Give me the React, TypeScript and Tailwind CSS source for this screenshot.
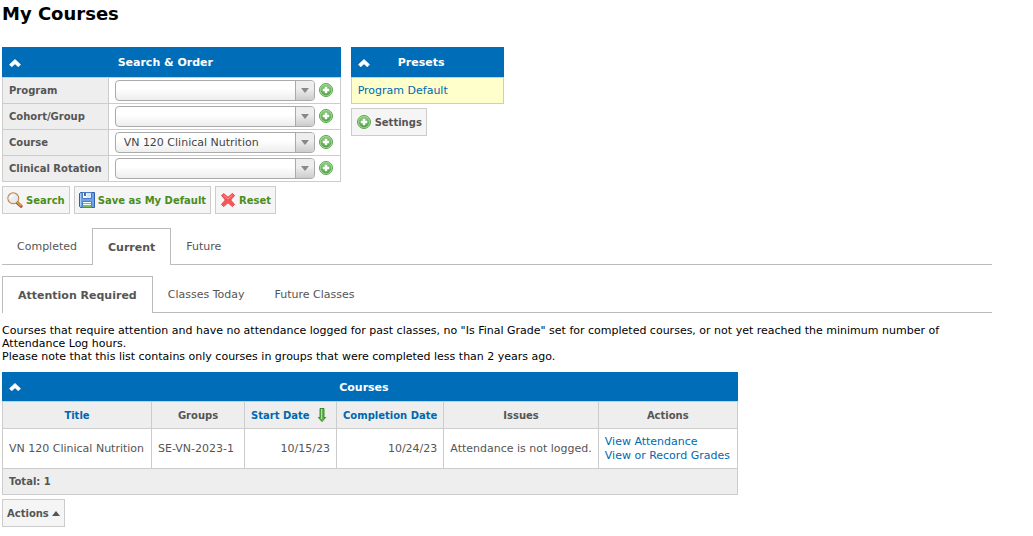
import { useState } from "react";

interface Filter {
  id: string;
  label: string;
  options: string[];
}

const filters: Filter[] = [
  { id: "program", label: "Program", options: [""] },
  { id: "cohort", label: "Cohort/Group", options: [""] },
  { id: "course", label: "Course", options: ["VN 120 Clinical Nutrition"] },
  { id: "rotation", label: "Clinical Rotation", options: [""] },
];

const Collapse = () => (
  <svg width="12" height="8" viewBox="0 0 12 8" className="block" aria-hidden="true">
    <path
      d="M6 .4 11.5 5.6 9.7 7.5H9L6 4.8 3 7.5h-.7L.5 5.6z"
      fill="#fff"
      stroke="#fff"
      strokeWidth="0.7"
      strokeLinejoin="round"
    />
  </svg>
);

const PlusIcon = () => (
  <svg width="16" height="16" viewBox="-1 -1 16 16" className="block" aria-hidden="true">
    <defs>
      <linearGradient id="plus" x1="0" y1="0" x2="0" y2="1">
        <stop offset="0" stopColor="#8bcb80" />
        <stop offset="1" stopColor="#50a443" />
      </linearGradient>
    </defs>
    <circle cx="7" cy="7" r="6.5" fill="#b4dfa8" stroke="#5aa34e" strokeWidth="1" />
    <circle cx="7" cy="7" r="5.4" fill="url(#plus)" />
    <path d="M6 4h2v2h2v2H8v2H6V8H4V6h2z" fill="#fff" stroke="#fff" strokeWidth="0.5" />
  </svg>
);

const SearchIcon = () => (
  <svg width="16" height="16" viewBox="0 0 16 16" aria-hidden="true">
    <path d="m10 10.5 4 3.7" stroke="#98562b" strokeWidth="3.2" strokeLinecap="round" />
    <path d="m10.3 10.3 3.5 3.2" stroke="#dc9860" strokeWidth="1.8" strokeLinecap="round" />
    <circle cx="6.3" cy="6.3" r="5.4" fill="#e4eef9" stroke="#b98650" strokeWidth="1.2" />
    <circle cx="6.3" cy="6.3" r="4.4" fill="none" stroke="#f5dfbd" strokeWidth="0.9" />
    <path d="M3.2 6.4a3.2 3.2 0 0 1 3.2-3.2" fill="none" stroke="#fff" strokeWidth="1.5" />
  </svg>
);

const SaveIcon = () => (
  <svg width="16" height="16" viewBox="0 0 16 16" aria-hidden="true">
    <path d="M.5 1.5 1.5.5h14v15h-14l-1-1z" fill="#6ba2e3" stroke="#2f5eaa" />
    <path d="M1.5 1.5v12.7" stroke="#a9cdf7" />
    <path d="M3.5.5h9v6h-9z" fill="#f5f9ff" stroke="#4b7dc4" />
    <path d="M5 1h2v3H5z" fill="#3f6db7" />
    <path d="M8 1h4v5H8z" fill="#d9e6f7" />
    <path d="M3.5 9.5h9v6h-9z" fill="#fff" stroke="#4b7dc4" />
    <path d="M4 11h8v1H4zM4 13h8v2H4z" fill="#78bd62" />
  </svg>
);

const ResetIcon = () => (
  <svg width="16" height="16" viewBox="-1 -1 16 16" aria-hidden="true">
    <path
      d="M.6 2.6 2.6.6 7 4.2 11.4.4l2.2 2.2L9.7 7l3.9 4.4-2.2 2.2L7 9.8l-4.4 3.8-2.2-2.2L4.3 7z"
      fill="#f5565a"
      stroke="#df363b"
      strokeWidth="0.8"
      strokeLinejoin="round"
    />
    <path d="m2.6 2.2 4.4 3.7 4.4-3.7" fill="none" stroke="#ff9493" strokeWidth="1" />
  </svg>
);

const SortIcon = () => (
  <svg width="16" height="16" viewBox="-4 -1 16 16" className="block" aria-hidden="true">
    <path d="M2 .5h4v9h1.7L4 13.6.3 9.5H2z" fill="#63b152" stroke="#34822b" strokeWidth="0.9" />
    <path d="M3.5 1v10" stroke="#b4dfa6" strokeWidth="1" />
  </svg>
);

const Button = ({
  children,
  className = "text-[#555]",
}: {
  children: React.ReactNode;
  className?: string;
}) => (
  <button
    type="button"
    className={`flex h-7 items-center gap-[3px] border border-[#ccc] bg-[#f5f5f5] px-1 text-[10px] font-bold whitespace-nowrap ${className}`}
  >
    {children}
  </button>
);

const PanelHead = ({ title }: { title: string }) => (
  <div className="grid grid-cols-[12px_1fr] items-center px-[6px]">
    <button type="button" aria-label={`Collapse ${title}`}>
      <Collapse />
    </button>
    <span className="pr-6 text-center text-[11px]">{title}</span>
  </div>
);

const Tabs = ({ items, initial }: { items: string[]; initial: string }) => {
  const [active, setActive] = useState(initial);

  return (
    <div role="tablist" className="flex h-[37px] border-b border-[#bbb]">
      {items.map((item) => (
        <button
          key={item}
          type="button"
          role="tab"
          aria-selected={item === active}
          onClick={() => setActive(item)}
          className={
            item === active
              ? "-mb-px border border-b-0 border-[#bbb] bg-white px-[15px] font-bold"
              : "px-[15px]"
          }
        >
          {item}
        </button>
      ))}
    </div>
  );
};

const th = "border border-[#ccc] px-[6px] text-[10px] font-bold";
const td = "border border-[#ccc] px-[6px]";

export default function App() {
  return (
    <main className="bg-white pt-1 pr-[41px] pb-2 pl-[2px] font-['Verdana','DejaVu_Sans',sans-serif] text-[11px] leading-[13px] text-[#555]">
      <h1 className="text-lg leading-5 font-bold text-black">My Courses</h1>

      <div className="mt-[23px] flex items-start gap-[10px]">
        <section>
          <table className="border-collapse">
            <thead>
              <tr className="h-[30px] bg-[#006db8] text-white">
                <th colSpan={2} className="border border-[#006db8] border-b-[#ccc] p-0">
                  <PanelHead title="Search & Order" />
                </th>
              </tr>
            </thead>
            <tbody>
              {filters.map((filter) => (
                <tr key={filter.id} className="h-[26px]">
                  <th className={`${th} bg-[#eee] text-left whitespace-nowrap`}>
                    <label htmlFor={filter.id}>{filter.label}</label>
                  </th>
                  <td className={td}>
                    <div className="flex items-start gap-[3px]">
                      <div className="relative">
                        <select
                          id={filter.id}
                          className="block h-[21px] w-[200px] appearance-none rounded-[4px] border border-[#aaa] bg-linear-to-t from-[#eee] to-white to-60% pr-6 pl-2 text-[#444]"
                        >
                          {filter.options.map((option) => (
                            <option key={option}>{option}</option>
                          ))}
                        </select>
                        <span className="pointer-events-none absolute inset-y-px right-px flex w-[19px] items-center justify-center rounded-r-[3px] border-l border-[#aaa] bg-linear-to-t from-[#ccc] to-[#eee] to-60%">
                          <svg width="8" height="5" viewBox="0 0 8 5" aria-hidden="true">
                            <path d="M0 0h8L4 5z" fill="#888" />
                          </svg>
                        </span>
                      </div>
                      <button type="button" className="h-5" aria-label={`Add ${filter.label}`}>
                        <PlusIcon />
                      </button>
                    </div>
                  </td>
                </tr>
              ))}
            </tbody>
          </table>
          <div className="mt-1 flex gap-1">
            <Button className="text-[#4b8d1c]">
              <SearchIcon />
              Search
            </Button>
            <Button className="text-[#4b8d1c]">
              <SaveIcon />
              Save as My Default
            </Button>
            <Button className="text-[#4b8d1c]">
              <ResetIcon />
              Reset
            </Button>
          </div>
        </section>

        <section className="w-[153px]">
          <table className="w-full border-collapse">
            <thead>
              <tr className="h-[30px] bg-[#006db8] text-white">
                <th className="border border-[#006db8] border-b-[#ccc] p-0">
                  <PanelHead title="Presets" />
                </th>
              </tr>
            </thead>
            <tbody>
              <tr className="h-[26px] bg-[#ffffcc]">
                <td className={td}>
                  <a href="#" className="text-[#0068b0]">
                    Program Default
                  </a>
                </td>
              </tr>
            </tbody>
          </table>
          <div className="mt-1 flex">
            <Button>
              <PlusIcon />
              Settings
            </Button>
          </div>
        </section>
      </div>

      <div className="mt-[14px] flex flex-col gap-[11px]">
        <Tabs items={["Completed", "Current", "Future"]} initial="Current" />
        <Tabs
          items={["Attention Required", "Classes Today", "Future Classes"]}
          initial="Attention Required"
        />
      </div>

      <p className="mt-[11px] text-black">
        Courses that require attention and have no attendance logged for past
        classes, no "Is Final Grade" set for completed courses, or not yet
        reached the minimum number of Attendance Log hours.
        <br />
        Please note that this list contains only courses in groups that were
        completed less than 2 years ago.
      </p>

      <table className="mt-[9px] border-collapse whitespace-nowrap">
        <colgroup>
          <col className="w-[149px]" />
          <col className="w-[93px]" />
          <col className="w-[92px]" />
          <col className="w-[107px]" />
          <col className="w-[154px]" />
          <col className="w-[139px]" />
        </colgroup>
        <thead>
          <tr className="h-[29px] bg-[#006db8] text-white">
            <th colSpan={6} className="border border-[#006db8] border-b-[#ccc] p-0">
              <PanelHead title="Courses" />
            </th>
          </tr>
          <tr className="h-[27px] bg-[#eee]">
            <th className={th}>
              <a href="#" className="text-[#0068b0]">Title</a>
            </th>
            <th className={th}>Groups</th>
            <th className={th}>
              <a href="#" className="flex items-center justify-between text-[#0068b0]">
                Start Date
                <SortIcon />
              </a>
            </th>
            <th className={th}>
              <a href="#" className="text-[#0068b0]">Completion Date</a>
            </th>
            <th className={th}>Issues</th>
            <th className={th}>Actions</th>
          </tr>
        </thead>
        <tbody>
          <tr className="h-10">
            <td className={td}>VN 120 Clinical Nutrition</td>
            <td className={td}>SE-VN-2023-1</td>
            <td className={`${td} text-right`}>10/15/23</td>
            <td className={`${td} text-right`}>10/24/23</td>
            <td className={td}>Attendance is not logged.</td>
            <td className={`${td} leading-[14px] text-[#0068b0]`}>
              <a href="#" className="block">View Attendance</a>
              <a href="#" className="block">View or Record Grades</a>
            </td>
          </tr>
        </tbody>
        <tfoot>
          <tr className="h-[26px] bg-[#eee]">
            <td colSpan={6} className={`${td} text-[10px] font-bold`}>
              Total: 1
            </td>
          </tr>
        </tfoot>
      </table>
      <div className="mt-1 flex">
        <Button>
          Actions
          <svg width="8" height="5" viewBox="0 0 8 5" aria-hidden="true">
            <path d="M0 5h8L4 0z" fill="#555" />
          </svg>
        </Button>
      </div>
    </main>
  );
}
